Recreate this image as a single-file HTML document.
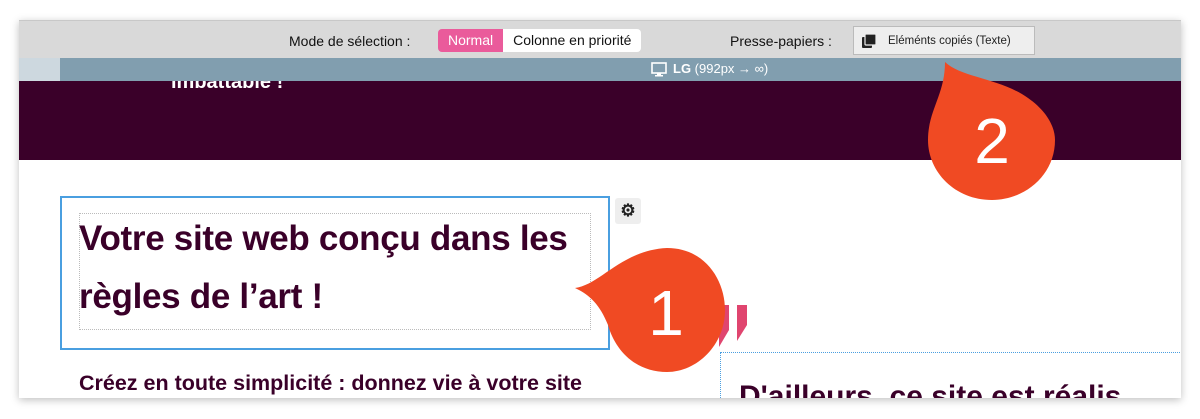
<!DOCTYPE html>
<html><head><meta charset="utf-8"><style>
*{margin:0;padding:0;box-sizing:border-box}
body{width:1200px;height:419px;background:#fff;position:relative;overflow:hidden;font-family:"Liberation Sans",sans-serif}
.win{position:absolute;left:19px;top:20px;width:1162px;height:378px;background:#fff;box-shadow:0 2px 8px rgba(0,0,0,.25);overflow:hidden}
.tb{position:absolute;left:0;top:0;width:100%;height:38px;background:#d9d9d9;border-top:1px solid #c8c8c8}
.lbl{position:absolute;top:12px;font-size:14px;color:#111}
.seg{position:absolute;left:419px;top:8px;height:23px;display:flex;border-radius:4px;overflow:hidden;font-size:14px}
.seg span{padding:3px 10px;line-height:17px}
.pp{position:absolute;left:834px;top:5px;width:182px;height:29px;border:1px solid #bbb;background:#eee;font-size:11.5px;color:#222;padding:8px 0 0 34px}
.bar{position:absolute;left:0;top:38px;width:100%;height:23px;background:#819eaf;color:#fff;font-size:13px;z-index:2}
.bar .l{position:absolute;left:0;top:0;width:41px;height:23px;background:#cdd8df}
.dark{position:absolute;left:0;top:61px;width:100%;height:79px;background:#3a0029;overflow:hidden}
.h{position:absolute;left:60px;top:190px;font-weight:bold;color:#3a0029;font-size:35px;line-height:58px;letter-spacing:-.3px}
</style></head><body>
<div class="win">
<div class="tb">
<div class="lbl" style="left:270px">Mode de sélection :</div>
<div class="seg"><span style="background:#ea5b9b;color:#fff">Normal</span><span style="background:#fff;color:#111">Colonne en priorité</span></div>
<div class="lbl" style="left:711px">Presse-papiers :</div>
<div class="pp"><svg style="position:absolute;left:8px;top:7px" width="14" height="14"><rect x="0" y="3" width="10" height="11" rx="1" fill="#222"/><rect x="3" y="0" width="11" height="11" rx="1" fill="#222" stroke="#eee" stroke-width="1.2"/></svg>Eléménts copiés (Texte)</div>
</div>
<div class="bar"><div class="l"></div>
<svg style="position:absolute;left:632px;top:4px" width="16" height="15"><rect x="1" y="1" width="14" height="10" fill="none" stroke="#fff" stroke-width="1.6"/><rect x="6" y="11" width="4" height="2" fill="#fff"/><rect x="4" y="13" width="8" height="1.5" fill="#fff"/></svg>
<span style="position:absolute;left:654px;top:3px"><b>LG</b> (992px → ∞)</span></div>
<div class="dark"><div style="position:absolute;left:152px;top:-10px;color:#fff;font-weight:bold;font-size:20px">imbattable !</div></div>
<div style="position:absolute;left:41px;top:176px;width:550px;height:154px;border:2px solid #4a9fe0"></div>
<div style="position:absolute;left:60px;top:193px;width:512px;height:117px;border:1px dotted #bbb"></div>
<div class="h">Votre site web conçu dans les<br>règles de l’art !</div>
<div style="position:absolute;left:60px;top:351px;font-weight:bold;color:#3a0029;font-size:21.5px">Créez en toute simplicité : donnez vie à votre site</div>
<div style="position:absolute;left:596px;top:178px;width:26px;height:26px;background:#eee;border-radius:3px;font-size:17px;font-weight:bold;text-align:center;line-height:26px;color:#222">⚙</div>
<svg style="position:absolute;left:690px;top:285px" width="50" height="50"><polygon points="10,0 20,0 20,25 10,42" fill="#e0456f"/><polygon points="28,0 38,0 38,20 28,36" fill="#e0456f"/></svg>
<div style="position:absolute;left:701px;top:332px;width:470px;height:60px;border-top:1px dotted #4a9fe0;border-left:1px dotted #4a9fe0"></div>
<div style="position:absolute;left:720px;top:360px;font-weight:bold;color:#3a0029;font-size:30px;white-space:nowrap">D'ailleurs, ce site est réalis</div>
</div>
<svg style="position:absolute;left:0;top:0;z-index:5" width="1200" height="419">
<path d="M575,288 C600,285 622,250 667,248 C705,248 725,280 725,310 C725,345 697,372 667,372 C635,372 615,350 608,325 C600,305 590,295 575,288 Z" fill="#f04a23"/>
<text x="666" y="335" font-family="Liberation Sans" font-size="64" fill="#fff" text-anchor="middle">1</text>
<path d="M945,62 C962,78 1000,78 1028,98 C1048,112 1055,128 1055,140 C1055,175 1025,200 992,200 C955,200 928,172 928,140 C928,110 945,95 945,62 Z" fill="#f04a23"/>
<text x="992" y="163" font-family="Liberation Sans" font-size="64" fill="#fff" text-anchor="middle">2</text>
</svg>
</body></html>
